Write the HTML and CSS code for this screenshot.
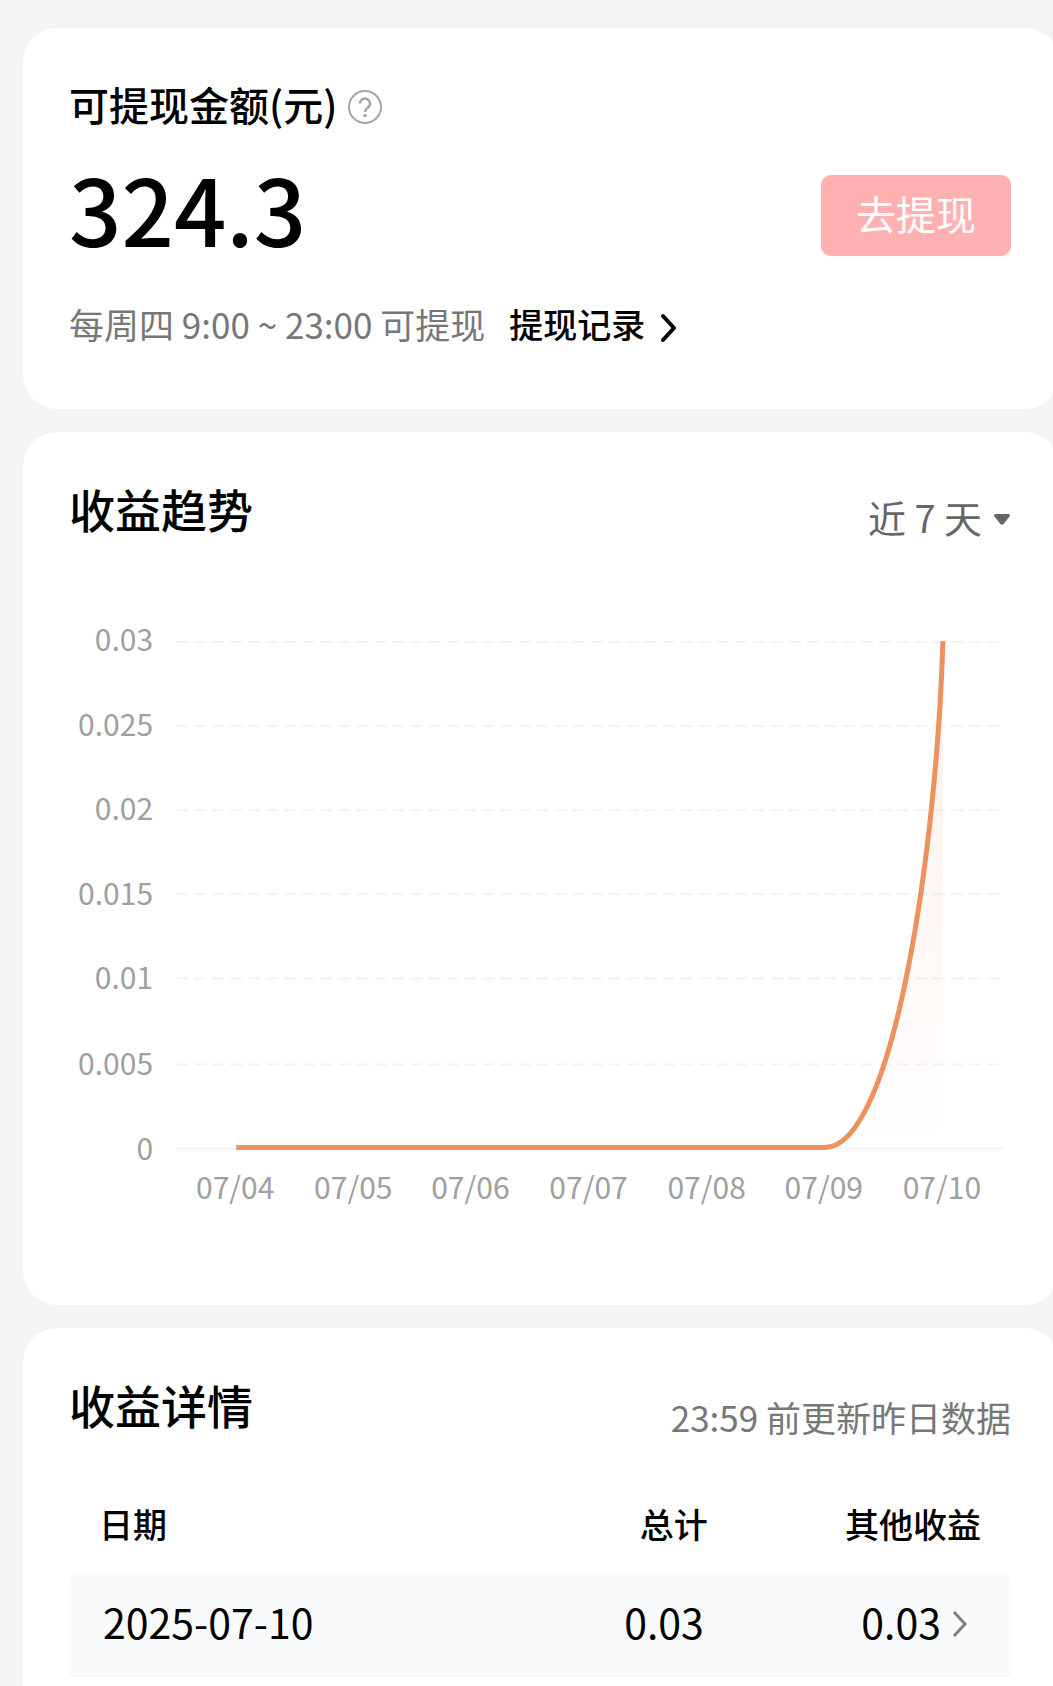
FILE: index.html
```html
<!DOCTYPE html>
<html lang="zh-CN">
<head>
    <meta charset="UTF-8">
    <meta name="viewport" content="width=device-width, initial-scale=1.0">
    <title>我的收益</title>
    <link rel="stylesheet" href="styles.css">
</head>
<body>
    <main class="page">
        <section class="card">
            <div class="balance-title">
                <h1>可提现金额(元)</h1>
                <button type="button" class="help" aria-label="说明">
                    <svg viewBox="0 0 36 36" fill="none" stroke="#a6a6a6" stroke-width="2">
                        <circle cx="18" cy="18" r="16"/>
                        <path d="M13 14.500a5 5 0 1 1 8 4c-2 1.500-3 2.300-3 4.500" stroke-width="2.500"/>
                        <circle cx="18" cy="26.500" r="1.800" fill="#a6a6a6" stroke="none"/>
                    </svg>
                </button>
            </div>
            <div class="balance-row">
                <strong class="amount">324.3</strong>
                <button type="button" class="withdraw">去提现</button>
            </div>
            <div class="balance-foot">
                <span class="muted">每周四 9:00 ~ 23:00 可提现</span>
                <a href="#records" class="records">提现记录
                    <svg viewBox="0 0 20 32" fill="none" stroke="#000" stroke-width="4" stroke-linecap="round" stroke-linejoin="round">
                        <path d="M4 4l11 12L4 28"/>
                    </svg>
                </a>
            </div>
        </section>

        <section class="card">
            <div class="card-head">
                <h2>收益趋势</h2>
                <div class="range">
                    <select aria-label="时间范围">
                        <option>近 7 天</option>
                    </select>
                    <svg viewBox="0 0 18 14"><path d="M3 1h12q3 0 1.500 2.500L11 10.500q-2 2.500-4 0L1.500 3.500Q0 1 3 1z" fill="#666"/></svg>
                </div>
            </div>
            <svg class="chart" viewBox="0 0 941 686" role="img" aria-label="近 7 天收益趋势">
                <defs>
                    <linearGradient id="area" x1="0" y1="0" x2="0" y2="1">
                        <stop offset="0" stop-color="#ed925f" stop-opacity="0.14"/>
                        <stop offset="1" stop-color="#ed925f" stop-opacity="0"/>
                    </linearGradient>
                </defs>
                <g class="grid">
                    <path d="M107 71H930M107 155H930M107 239H930M107 323H930M107 407H930M107 493H930"/>
                    <path class="axis" d="M107 577H934"/>
                </g>
                <g class="labels y-labels">
                    <text x="84" y="80">0.03</text>
                    <text x="84" y="165">0.025</text>
                    <text x="84" y="249">0.02</text>
                    <text x="84" y="334">0.015</text>
                    <text x="84" y="418">0.01</text>
                    <text x="84" y="503">0.005</text>
                    <text x="84" y="588">0</text>
                </g>
                <g class="labels x-labels">
                    <text x="166" y="627">07/04</text>
                    <text x="284" y="627">07/05</text>
                    <text x="401" y="627">07/06</text>
                    <text x="519" y="627">07/07</text>
                    <text x="637" y="627">07/08</text>
                    <text x="754" y="627">07/09</text>
                    <text x="872" y="627">07/10</text>
                </g>
                <path d="M755 576C825 576 867 270 873 70V576z" fill="url(#area)"/>
                <path class="line" d="M167 576H755C825 576 867 270 873 70"/>
            </svg>
        </section>

        <section class="card card-last">
            <div class="card-head">
                <h2>收益详情</h2>
                <p class="muted update-note">23:59 前更新昨日数据</p>
            </div>
            <table>
                <thead>
                    <tr>
                        <th class="col-date">日期</th>
                        <th class="col-total">总计</th>
                        <th>其他收益</th>
                    </tr>
                </thead>
                <tbody>
                    <tr>
                        <td>2025-07-10</td>
                        <td>0.03</td>
                        <td>
                            <a href="#detail">0.03<svg viewBox="0 0 40 32" fill="none" stroke="#808080" stroke-width="3"><path d="M13 4l11 12-11 12"/></svg></a>
                        </td>
                    </tr>
                </tbody>
            </table>
        </section>
    </main>
</body>
</html>
```
FILE: styles.css
```css
* {
    box-sizing: border-box;
    margin: 0;
    padding: 0;
}

body {
    font-family: "Noto Sans CJK SC", sans-serif;
    background-color: #f3f4f6;
    color: #000;
}

button, select {
    font-family: inherit;
    border: none;
    background: none;
}

a {
    color: inherit;
    text-decoration: none;
}

.page {
    display: flex;
    flex-direction: column;
    gap: 23px;
    padding: 28px 0 0 23px;
    overflow: hidden;
}

/* 卡片右侧略超出屏幕 */
.card {
    margin-right: -6px;
    padding: 47px 48px 47px 46px;
    border-radius: 34px;
    background-color: #fff;
}

.card:first-child {
    padding-bottom: 61px;
}

.card-last {
    padding-bottom: 10px;
    border-radius: 34px 34px 0 0;
}

.muted {
    color: #777;
    font-size: 35px;
}

/* 余额 */
.balance-title {
    display: flex;
    align-items: center;
    gap: 10px;
}

h1 {
    font-size: 40px;
    font-weight: 500;
    line-height: 58px;
}

.help {
    display: flex;
    padding-top: 6px;
}

.help svg {
    width: 36px;
    height: 36px;
}

.balance-row {
    display: flex;
    justify-content: space-between;
    align-items: flex-start;
    margin: 42px 0 44px;
}

.amount {
    font-size: 92px;
    font-weight: 500;
    line-height: 64px;
}

.withdraw {
    height: 81px;
    padding: 0 35px 6px;
    border-radius: 10px;
    background-color: #ffb1b1;
    color: #fff;
    font-size: 40px;
}

.balance-foot {
    display: flex;
    gap: 24px;
    line-height: 48px;
}

.records {
    display: flex;
    align-items: center;
    gap: 14px;
    font-size: 34px;
    font-weight: 500;
}

.records svg {
    width: 20px;
    height: 32px;
    margin-top: 8px;
}

/* 标题栏 */
.card-head {
    display: flex;
    justify-content: space-between;
    align-items: flex-start;
}

h2 {
    font-size: 46px;
    font-weight: 500;
    line-height: 58px;
}

.update-note {
    padding-top: 4px;
    line-height: 76px;
}

.range {
    display: flex;
    align-items: center;
    gap: 10px;
}

.range select {
    appearance: none;
    height: 72px;
    padding-top: 2px;
    color: #666;
    font-size: 38px;
}

.range svg {
    width: 18px;
    height: 14px;
    margin-top: 10px;
}

/* 趋势图 */
.chart {
    display: block;
    width: 100%;
    margin-top: 20px;
}

.grid path {
    fill: none;
    stroke: #f3f3f3;
    stroke-width: 2;
    stroke-dasharray: 12 6;
}

.grid .axis {
    stroke-dasharray: none;
}

.labels {
    fill: #a0a0a0;
    font-size: 30px;
}

.y-labels {
    text-anchor: end;
}

.x-labels {
    text-anchor: middle;
}

.line {
    fill: none;
    stroke: #ed925f;
    stroke-width: 5;
}

/* 明细表 */
table {
    width: 100%;
    margin-top: 16px;
    table-layout: fixed;
    border-collapse: separate;
    border-spacing: 0;
}

th, td {
    padding: 0 30px 0 0;
    text-align: right;
}

th {
    height: 102px;
    padding-top: 4px;
    font-size: 34px;
    font-weight: 500;
}

td {
    height: 104px;
    padding-bottom: 6px;
    border-bottom: 2px solid #f3f4f6;
    background-color: #f9fafc;
    font-size: 41px;
}

th:first-child, td:first-child {
    text-align: left;
}

th:first-child {
    padding-left: 30px;
}

td:first-child {
    padding-left: 34px;
    border-radius: 8px 0 0 8px;
}

td:nth-child(2) {
    padding-right: 34px;
}

td:last-child {
    border-radius: 0 8px 8px 0;
}

.col-date {
    width: 40%;
}

.col-total {
    width: 31%;
}

td a {
    display: flex;
    justify-content: flex-end;
    align-items: center;
}

td svg {
    width: 40px;
    height: 32px;
    margin-top: 6px;
}
```
